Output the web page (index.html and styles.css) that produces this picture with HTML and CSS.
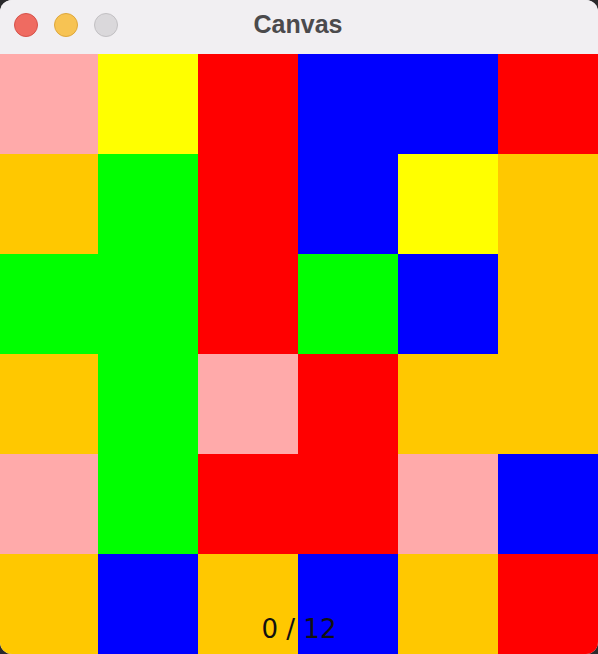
FILE: index.html
```html
<!DOCTYPE html>
<html>
<head>
<meta charset="utf-8">
<link rel="stylesheet" href="styles.css">
</head>
<body>
<div class="window">
  <div class="titlebar">
    <div class="lights">
      <span class="light red"></span>
      <span class="light yellow"></span>
      <span class="light gray"></span>
    </div>
    <div class="title">Canvas</div>
  </div>
  <div class="canvas">
    <div class="grid">
      <div class="c pk"></div><div class="c ye"></div><div class="c rd"></div><div class="c bl"></div><div class="c bl"></div><div class="c rd"></div>
      <div class="c or"></div><div class="c gr"></div><div class="c rd"></div><div class="c bl"></div><div class="c ye"></div><div class="c or"></div>
      <div class="c gr"></div><div class="c gr"></div><div class="c rd"></div><div class="c gr"></div><div class="c bl"></div><div class="c or"></div>
      <div class="c or"></div><div class="c gr"></div><div class="c pk"></div><div class="c rd"></div><div class="c or"></div><div class="c or"></div>
      <div class="c pk"></div><div class="c gr"></div><div class="c rd"></div><div class="c rd"></div><div class="c pk"></div><div class="c bl"></div>
      <div class="c or"></div><div class="c bl"></div><div class="c or"></div><div class="c bl"></div><div class="c or"></div><div class="c rd"></div>
    </div>
    <div class="counter">0 / 12</div>
  </div>
</div>
</body>
</html>
```
FILE: styles.css
```css
html, body {
  margin: 0;
  padding: 0;
  background: #2a2a2c;
  width: 598px;
  height: 654px;
  overflow: hidden;
}
.window {
  width: 598px;
  height: 654px;
  border-radius: 12px;
  overflow: hidden;
  background: #f1eff2;
  display: flex;
  flex-direction: column;
}
.titlebar {
  height: 54px;
  flex: none;
  position: relative;
  background: #f1eff2;
  display: flex;
  align-items: center;
  justify-content: center;
}
.lights {
  position: absolute;
  left: 14px;
  top: 13px;
  display: flex;
  gap: 16px;
}
.light {
  width: 22px;
  height: 22px;
  border-radius: 50%;
  display: block;
}
.red { background: #ef6b61; border: 1px solid #d6524a; }
.yellow { background: #f7c353; border: 1px solid #dea73c; }
.gray { background: #dad8db; border: 1px solid #c2c0c3; }
.title {
  font-family: "Liberation Sans", Arial, sans-serif;
  font-weight: bold;
  font-size: 25px;
  color: #4b4a4c;
  margin-top: -5px;
  margin-left: -2px;
}
.canvas {
  position: relative;
  flex: none;
  height: 600px;
}
.grid {
  display: grid;
  grid-template-columns: 98px repeat(5, 100px);
  grid-template-rows: repeat(6, 100px);
}
.pk { background: #ffaaaa; }
.ye { background: #ffff00; }
.rd { background: #ff0000; }
.bl { background: #0000ff; }
.or { background: #ffc800; }
.gr { background: #00ff00; }
.counter {
  position: absolute;
  left: 0;
  right: 0;
  top: 560px;
  text-align: center;
  font-family: "DejaVu Sans", sans-serif;
  font-size: 26px;
  color: #111;
}
```
